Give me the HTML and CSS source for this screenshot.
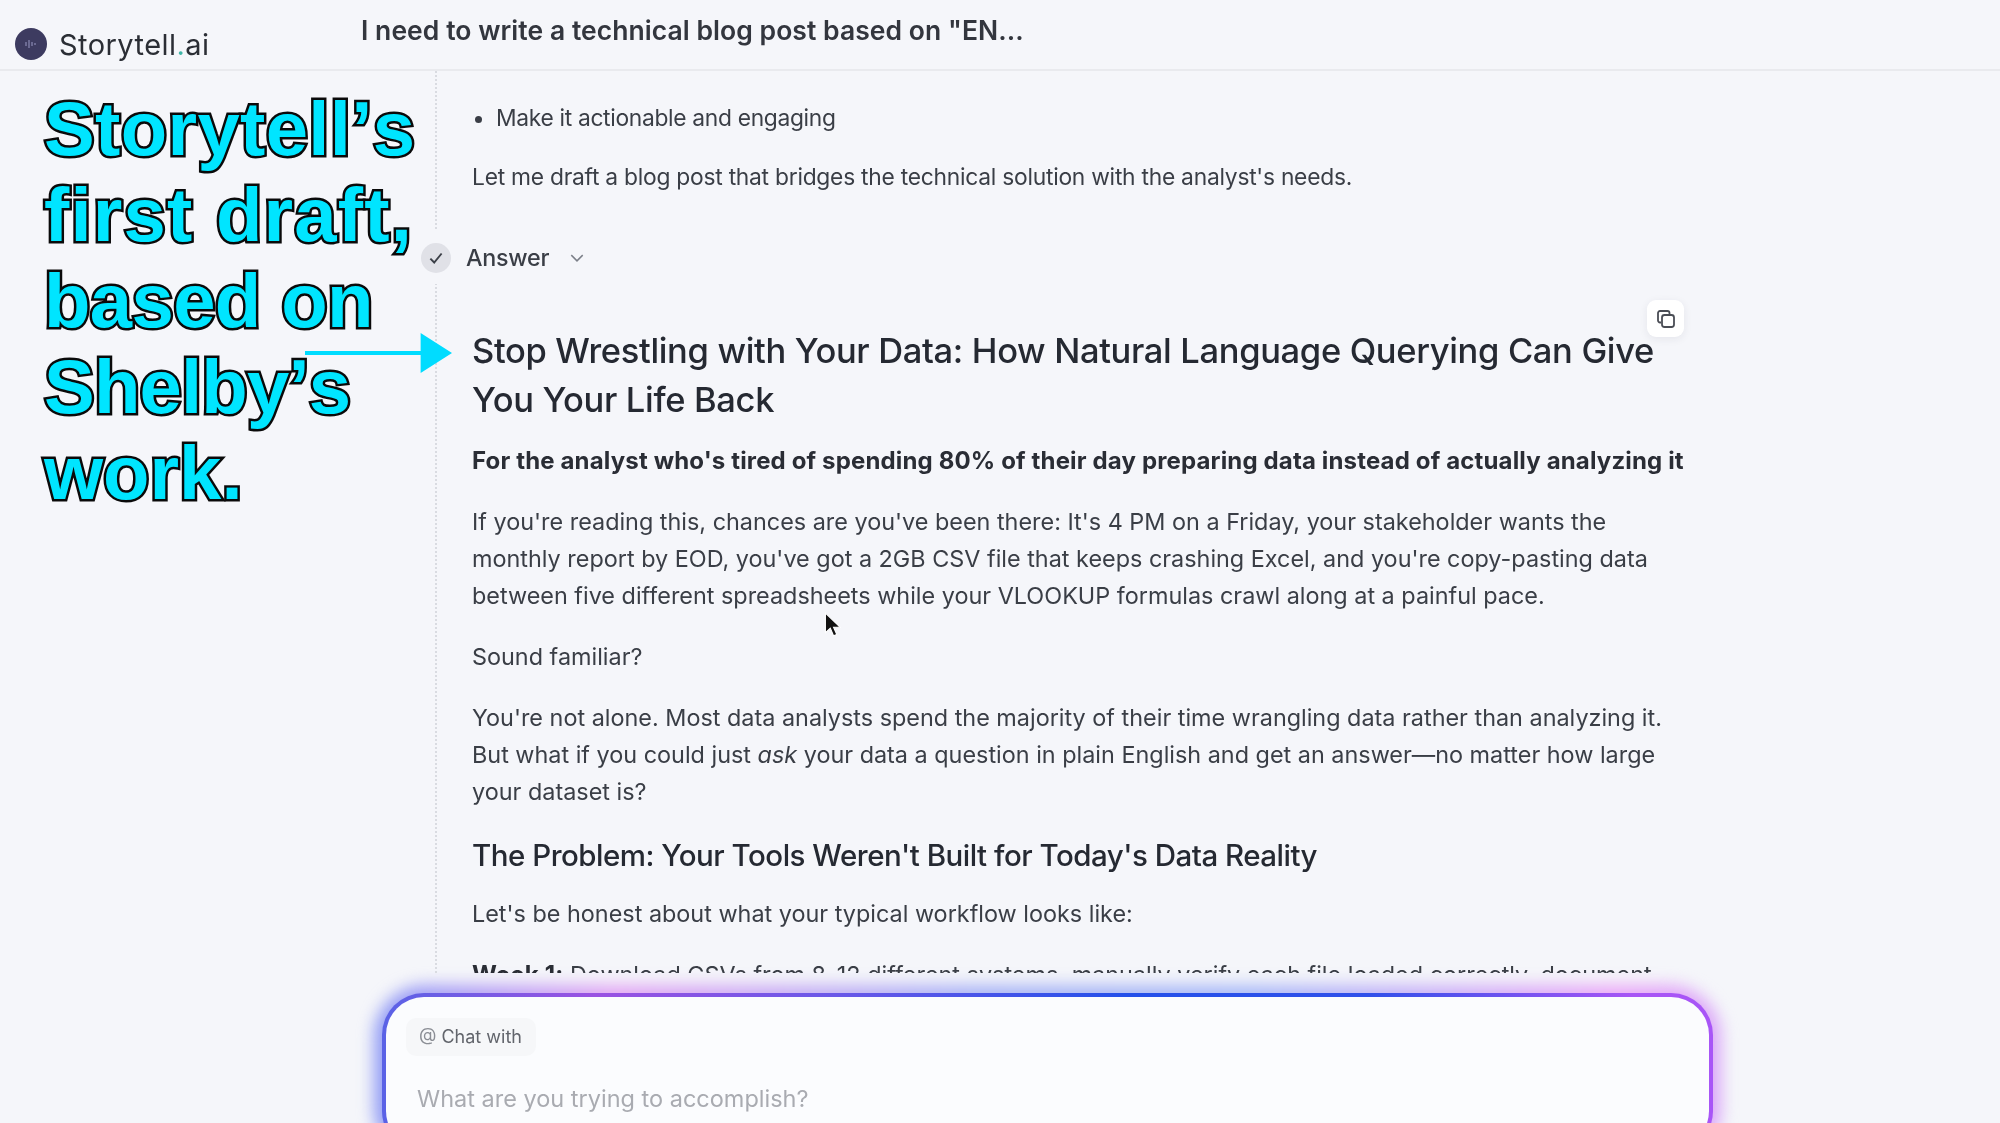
FILE: index.html
```html
<!DOCTYPE html>
<html lang="en">
<head>
    <meta charset="UTF-8">
    <title>Storytell.ai</title>
    <link rel="stylesheet" href="styles.css">
</head>
<body>

<header class="topbar">
    <div class="brand">
        <svg class="brand-mark" viewBox="0 0 32 32">
            <circle cx="16" cy="16" r="16" fill="#3d3b60"/>
            <path d="M11 14v4M14 12v8M17 14v4M20 15v2" stroke="#9a9ac4" stroke-width="1" fill="none"/>
        </svg>
        <span class="brand-name">Storytell<span class="brand-dot">.</span>ai</span>
    </div>
    <div class="topbar-title">I need to write a technical blog post based on "EN...</div>
</header>

<main class="scroller">
    <div class="thread">
        <ul class="bullets">
            <li>Make it actionable and engaging</li>
        </ul>
        <p class="intro">Let me draft a blog post that bridges the technical solution with the analyst's needs.</p>

        <div class="answer-row">
            <span class="answer-check">
                <svg viewBox="0 0 16 16" width="18" height="18">
                    <path d="M3 8.5l3.4 3.5L13 4" stroke="#3c4048" stroke-width="1.7" fill="none"/>
                </svg>
            </span>
            <span class="answer-label">Answer</span>
            <svg class="answer-chevron" viewBox="0 0 14 14" width="16" height="16">
                <path d="M2 4.5l5 5 5-5" stroke="#7b7f88" stroke-width="1.3" fill="none"/>
            </svg>
        </div>

        <article class="answer">
            <span class="copy-btn">
                <svg viewBox="0 0 20 20" width="20" height="20">
                    <path d="M5 13.5H4a2 2 0 0 1-2-2V4a2 2 0 0 1 2-2h7.500a2 2 0 0 1 2 2v1" stroke="#4a4d55" stroke-width="1.8" fill="none"/>
                    <rect x="6" y="6" width="12" height="12" rx="2.500" stroke="#4a4d55" stroke-width="1.8" fill="none"/>
                </svg>
            </span>
            <h1>Stop Wrestling with Your Data: How Natural Language Querying Can Give You Your Life Back</h1>
            <p><strong>For the analyst who's tired of spending 80% of their day preparing data instead of actually analyzing it</strong></p>
            <p>If you're reading this, chances are you've been there: It's 4 PM on a Friday, your stakeholder wants the monthly report by EOD, you've got a 2GB CSV file that keeps crashing Excel, and you're copy-pasting data between five different spreadsheets while your VLOOKUP formulas crawl along at a painful pace.</p>
            <p>Sound familiar?</p>
            <p>You're not alone. Most data analysts spend the majority of their time wrangling data rather than analyzing it. But what if you could just <em>ask</em> your data a question in plain English and get an answer—no matter how large your dataset is?</p>
            <h2>The Problem: Your Tools Weren't Built for Today's Data Reality</h2>
            <p>Let's be honest about what your typical workflow looks like:</p>
            <p><strong>Week 1:</strong> Download CSVs from 8-12 different systems, manually verify each file loaded correctly, document</p>
        </article>
    </div>
</main>

<section class="composer">
    <span class="chat-chip"><span class="chip-at">@</span> Chat with</span>
    <div class="composer-hint">What are you trying to accomplish?</div>
</section>

<!-- annotation laid over the video frame -->
<div class="callout">
    <div class="callout-line line-a">Storytell’s</div>
    <div class="callout-line line-b">first draft,</div>
    <div class="callout-line line-c">based on</div>
    <div class="callout-line line-d">Shelby’s</div>
    <div class="callout-line">work.</div>
</div>
<svg class="callout-arrow" viewBox="0 0 150 40" width="147" height="40" preserveAspectRatio="none">
    <path d="M0 18h118v-18l32 20-32 20v-18H0z" fill="#00dcff"/>
</svg>
<svg class="cursor" viewBox="0 0 16 24" width="18" height="26">
    <path d="M1 1v18l4.500-4 3 7 3-1.300-3-6.700h6z" fill="#111" stroke="#fff" stroke-width="1"/>
</svg>

</body>
</html>
```

FILE: styles.css
```css
* {
    margin: 0;
    padding: 0;
    box-sizing: border-box;
}

html, body {
    height: 100%;
}

body {
    position: relative;
    display: flex;
    flex-direction: column;
    height: 1123px;
    overflow: hidden;
    background-color: #f5f6fa;
    font-family: Inter, "Liberation Sans", sans-serif;
    color: #3a3e46;
}

/* top bar */
.topbar {
    display: flex;
    flex-shrink: 0;
    height: 71px;
    border-bottom: 2px solid #e9eaee;
    filter: blur(0.4px);
}

.brand {
    display: flex;
    align-items: center;
    gap: 12px;
    width: 361px;
    height: 88px;
    padding-left: 15px;
}

.brand-mark {
    width: 32px;
    height: 32px;
}

.brand-name {
    font-size: 29px;
    color: #2b2e35;
    letter-spacing: 0.45px;
}

.brand-dot {
    color: #3fb6a8;
}

.topbar-title {
    padding-top: 13px;
    font-size: 26.500px;
    font-weight: 600;
    line-height: 34px;
    letter-spacing: 0.05px;
    color: #33363e;
}

/* conversation */
.scroller {
    flex-shrink: 0;
    height: 902px;
    overflow: hidden;
    filter: blur(0.4px);
}

.thread {
    width: 1280px;
    min-height: 100%;
    margin-left: 435px;
    padding: 28px 0 0 35px;
    border-left: 2px dotted #d9dbe1;
    font-size: 22.800px;
    line-height: 37px;
    letter-spacing: -0.25px;
}

.bullets {
    padding-left: 24px;
    letter-spacing: -0.32px;
}

.intro {
    margin-top: 22px;
}

.answer-row {
    display: flex;
    align-items: center;
    margin: 36px 0 0 -51px;
    padding: 8px 0;
    background-color: #f5f6fa;
}

.answer-check {
    display: flex;
    align-items: center;
    justify-content: center;
    width: 30px;
    height: 30px;
    border-radius: 50%;
    background-color: #e0e1e7;
}

.answer-label {
    margin-left: 15px;
    font-size: 23.300px;
    font-weight: 500;
}

.answer-chevron {
    margin-left: 20px;
}

.answer {
    position: relative;
    width: 1215px;
    padding-top: 43px;
}

.answer p {
    margin-bottom: 24px;
    font-size: 23.400px;
    letter-spacing: 0;
}

.answer h1 {
    margin-bottom: 18px;
    font-size: 34.500px;
    font-weight: 500;
    line-height: 48.500px;
    letter-spacing: -0.34px;
    color: #252932;
}

.answer h2 {
    margin: 25px 0 20px;
    font-size: 29.500px;
    font-weight: 500;
    line-height: 40px;
    letter-spacing: -0.5px;
    color: #252932;
}

.answer strong {
    font-size: 24px;
    font-weight: 700;
    letter-spacing: 0.15px;
    color: #2a2d35;
}

.copy-btn {
    position: absolute;
    top: 16px;
    right: 3px;
    display: flex;
    align-items: center;
    justify-content: center;
    width: 37px;
    height: 37px;
    border-radius: 9px;
    background-color: #fff;
    box-shadow: 0 2px 8px rgba(40, 44, 60, 0.08);
}

/* composer */
.composer {
    position: relative;
    flex-shrink: 0;
    width: 1331px;
    height: 160px;
    margin: 20px 0 0 382px;
    padding: 21px 20px;
    border: 4px solid transparent;
    border-radius: 42px;
    background:
        linear-gradient(#fbfcfe, #fbfcfe) padding-box,
        linear-gradient(90deg, #5a62e6 0%, #9a52e2 16%, #6a58e8 34%, #2450ea 56%, #3050ea 74%, #a855f5 94%, #a855f7 100%) border-box;
}

.composer::before {
    content: "";
    position: absolute;
    inset: -12px;
    z-index: -1;
    border-radius: 52px;
    background: linear-gradient(90deg, #8f9cf5 0%, #e3a6f3 18%, #a9b4f5 45%, #a9b9f7 65%, #eba8f7 92%, #d9a8f7 100%);
    filter: blur(8px);
}

.chat-chip {
    display: inline-block;
    padding: 0 14px 0 13px;
    border-radius: 10px;
    background-color: #f6f7f9;
    font-size: 18px;
    line-height: 38px;
    color: #62656c;
    filter: blur(0.4px);
}

.chip-at {
    color: #8b8e95;
}

.composer-hint {
    margin: 27px 0 0 11px;
    font-size: 23.500px;
    line-height: 32px;
    color: #a9abb1;
    filter: blur(0.4px);
}

/* overlays */
.callout {
    position: absolute;
    top: 86px;
    left: 44px;
    font-family: "Liberation Sans", Arial, sans-serif;
    font-size: 76px;
    font-weight: 700;
    font-kerning: none;
    line-height: 86px;
    color: #00e5ff;
    -webkit-text-stroke: 5px #0a0a0a;
    paint-order: stroke fill;
    white-space: nowrap;
}

.line-a {
    letter-spacing: 0.35px;
}

.line-b {
    letter-spacing: 1.2px;
}

.line-c {
    letter-spacing: -0.6px;
}

.line-d {
    letter-spacing: -0.8px;
}

.callout-arrow {
    position: absolute;
    top: 333px;
    left: 305px;
}

.cursor {
    position: absolute;
    top: 612px;
    left: 824px;
}
```
